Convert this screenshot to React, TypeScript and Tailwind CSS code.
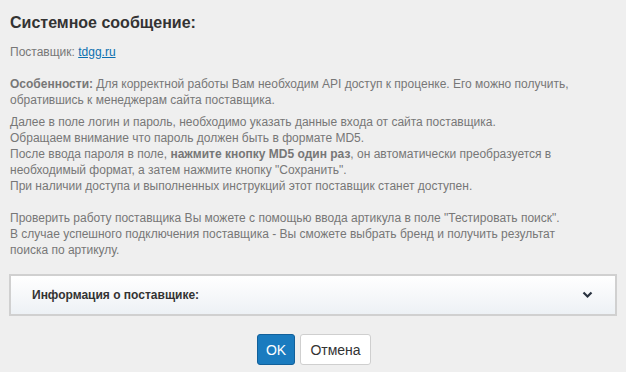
export default function App() {
    return (
        <div className="w-[626px] h-[372px] bg-[#efefef] px-[10px] pt-[13px] font-['Liberation_Sans',Arial,sans-serif] text-[12px] leading-[16px] text-[#777]">
            <h2 className="text-[16px] leading-[20px] font-bold text-[#333]">Системное сообщение:</h2>

            <div className="mt-[11px]">
                Поставщик: <a href="#" className="text-[#0b6fb0] underline">tdgg.ru</a>
            </div>

            <p className="mt-[16px] whitespace-nowrap">
                <b>Особенности:</b> Для корректной работы Вам необходим API доступ к проценке. Его можно получить,<br />
                обратившись к менеджерам сайта поставщика.
            </p>

            <p className="mt-[6px] whitespace-nowrap">
                Далее в поле логин и пароль, необходимо указать данные входа от сайта поставщика.<br />
                Обращаем внимание что пароль должен быть в формате MD5.<br />
                После ввода пароля в поле, <b>нажмите кнопку MD5 один раз</b>, он автоматически преобразуется в<br />
                необходимый формат, а затем нажмите кнопку "Сохранить".<br />
                При наличии доступа и выполненных инструкций этот поставщик станет доступен.<br />
                <br />
                Проверить работу поставщика Вы можете с помощью ввода артикула в поле "Тестировать поиск".<br />
                В случае успешного подключения поставщика - Вы сможете выбрать бренд и получить результат<br />
                поиска по артикулу.
            </p>

            <div className="mt-[16px] ml-[-1px] w-[608px] h-[42px] border-2 border-[#d0d0d0] bg-gradient-to-b from-white to-[#edf1f5] flex items-center justify-between pl-[21px] pr-[22px]">
                <span className="font-bold text-[#333]">Информация о поставщике:</span>
                <svg width="11" height="8" viewBox="0 0 11 8" fill="none">
                    <path d="M1.5 1.5 L5.5 5.5 L9.5 1.5" stroke="#2a3340" strokeWidth="2.2" />
                </svg>
            </div>

            <div className="mt-[18px] flex justify-center gap-[5px] pl-[2px]">
                <button className="h-[31px] w-[38px] rounded-[3px] bg-[#1a7bbf] border border-[#12609a] text-white text-[14px]">OK</button>
                <button className="h-[31px] w-[71px] rounded-[3px] bg-white border border-[#cfcfcf] text-[#333] text-[14px]">Отмена</button>
            </div>
        </div>
    )
}
